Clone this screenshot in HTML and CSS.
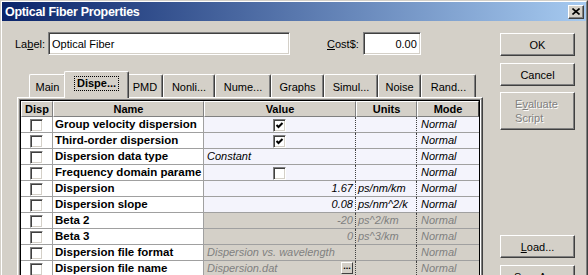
FILE: index.html
```html
<!DOCTYPE html>
<html lang="en">
<head>
  <meta charset="UTF-8">
  <title>Optical Fiber Properties</title>
  <link rel="stylesheet" href="styles.css">
</head>
<body>
  <div class="window">
    <div class="frame">
      <div class="titlebar">
        <span class="title">Optical Fiber Properties</span>
        <span class="close">
          <svg width="8" height="7" viewBox="0 0 8 7"><path d="M0.5 0.5 L7.5 6.5 M7.5 0.5 L0.5 6.5" stroke="#000" stroke-width="1.6"/></svg>
        </span>
      </div>

      <div class="content">
        <div class="main">
          <div class="fields">
            <span class="lbl">La<u>b</u>el:</span>
            <div class="field name-field">Optical Fiber</div>
            <span class="lbl cost-lbl"><u>C</u>ost$:</span>
            <div class="field cost-field">0.00</div>
          </div>

          <div class="tabs">
            <div class="tab">Main</div>
            <div class="tab selected"><span class="focus">Dispe...</span></div>
            <div class="tab">PMD</div>
            <div class="tab">Nonli...</div>
            <div class="tab">Nume...</div>
            <div class="tab">Graphs</div>
            <div class="tab">Simul...</div>
            <div class="tab">Noise</div>
            <div class="tab">Rand...</div>
          </div>

          <div class="panel">
            <div class="gridwrap">
              <div class="gridinner">
                <table class="grid">
                  <colgroup>
                    <col class="c-disp"><col class="c-name"><col class="c-value"><col class="c-units"><col class="c-mode">
                  </colgroup>
                  <tr>
                    <th>Disp</th><th>Name</th><th>Value</th><th>Units</th><th>Mode</th>
                  </tr>
                  <tr>
                    <td class="disp"><span class="cb"></span></td>
                    <td class="name">Group velocity dispersion</td>
                    <td class="value center"><span class="cb"><svg width="9" height="9" viewBox="0 0 9 9"><polyline points="1.5,4 3.5,6 7.5,2" fill="none" stroke="#000" stroke-width="2"/></svg></span></td>
                    <td class="units"></td>
                    <td class="mode">Normal</td>
                  </tr>
                  <tr>
                    <td class="disp"><span class="cb"></span></td>
                    <td class="name">Third-order dispersion</td>
                    <td class="value center"><span class="cb"><svg width="9" height="9" viewBox="0 0 9 9"><polyline points="1.5,4 3.5,6 7.5,2" fill="none" stroke="#000" stroke-width="2"/></svg></span></td>
                    <td class="units"></td>
                    <td class="mode">Normal</td>
                  </tr>
                  <tr>
                    <td class="disp"><span class="cb"></span></td>
                    <td class="name">Dispersion data type</td>
                    <td class="value">Constant</td>
                    <td class="units"></td>
                    <td class="mode">Normal</td>
                  </tr>
                  <tr>
                    <td class="disp"><span class="cb"></span></td>
                    <td class="name">Frequency domain parame</td>
                    <td class="value center"><span class="cb"></span></td>
                    <td class="units"></td>
                    <td class="mode">Normal</td>
                  </tr>
                  <tr>
                    <td class="disp"><span class="cb"></span></td>
                    <td class="name">Dispersion</td>
                    <td class="value num">1.67</td>
                    <td class="units">ps/nm/km</td>
                    <td class="mode">Normal</td>
                  </tr>
                  <tr>
                    <td class="disp"><span class="cb"></span></td>
                    <td class="name">Dispersion slope</td>
                    <td class="value num">0.08</td>
                    <td class="units">ps/nm^2/k</td>
                    <td class="mode">Normal</td>
                  </tr>
                  <tr class="off">
                    <td class="disp"><span class="cb"></span></td>
                    <td class="name">Beta 2</td>
                    <td class="value num">-20</td>
                    <td class="units">ps^2/km</td>
                    <td class="mode">Normal</td>
                  </tr>
                  <tr class="off">
                    <td class="disp"><span class="cb"></span></td>
                    <td class="name">Beta 3</td>
                    <td class="value num">0</td>
                    <td class="units">ps^3/km</td>
                    <td class="mode">Normal</td>
                  </tr>
                  <tr class="off">
                    <td class="disp"><span class="cb"></span></td>
                    <td class="name">Dispersion file format</td>
                    <td class="value">Dispersion vs. wavelength</td>
                    <td class="units"></td>
                    <td class="mode">Normal</td>
                  </tr>
                  <tr class="off">
                    <td class="disp"><span class="cb"></span></td>
                    <td class="name">Dispersion file name</td>
                    <td class="value"><span class="dots">...</span>Dispersion.dat</td>
                    <td class="units"></td>
                    <td class="mode">Normal</td>
                  </tr>
                </table>
              </div>
            </div>
          </div>
        </div>

        <div class="buttons">
          <div class="btn ok">OK</div>
          <div class="btn cancel">Cancel</div>
          <div class="btn evaluate"><span class="twoline">E<u>v</u>aluate<br>Script</span></div>
          <div class="btn load"><u>L</u>oad...</div>
          <div class="btn save">Save <u>A</u>s...</div>
        </div>
      </div>
    </div>
  </div>
</body>
</html>
```

FILE: styles.css
```css
body {
  margin: 0;
  background: #d4d0c8;
  font-family: "Liberation Sans", Arial, sans-serif;
  font-size: 11px;
  color: #000;
  overflow: hidden;
}

.window {
  width: 588px;
  height: 300px;
  box-sizing: border-box;
  border: 1px solid;
  border-color: #d4d0c8 #404040 #404040 #d4d0c8;
}

.frame {
  height: 100%;
  box-sizing: border-box;
  border: 1px solid;
  border-color: #fff #808080 #808080 #fff;
}

.titlebar {
  height: 19px;
  display: flex;
  align-items: center;
  justify-content: space-between;
  padding: 0 2px 0 3px;
  background: linear-gradient(to right, #0a246a, #a6caf0);
  color: #fff;
  font-size: 12.5px;
  font-weight: bold;
  letter-spacing: -0.3px;
}

.close {
  width: 16px;
  height: 14px;
  box-sizing: border-box;
  display: flex;
  align-items: center;
  justify-content: center;
  background: #d4d0c8;
  border: 1px solid;
  border-color: #fff #404040 #404040 #fff;
  box-shadow: inset -1px -1px #808080;
}

.content {
  display: flex;
}

.main {
  width: 483px;
  padding-left: 13px;
}

.fields {
  display: flex;
  align-items: center;
  margin-top: 11px;
  height: 23px;
}

.field {
  height: 23px;
  box-sizing: border-box;
  display: flex;
  align-items: center;
  padding: 0 3px;
  background: #fff;
  border: 1px solid;
  border-color: #808080 #fff #fff #808080;
  box-shadow: inset 1px 1px #404040, inset -1px -1px #d4d0c8;
}

.name-field {
  width: 242px;
  margin-left: 3px;
}

.cost-lbl {
  margin-left: 37px;
}

.cost-field {
  width: 58px;
  margin-left: 4px;
  justify-content: flex-end;
}

.tabs {
  display: flex;
  align-items: flex-end;
  height: 24px;
  margin-top: 18px;
  padding-left: 14px;
}

.tab {
  height: 23px;
  box-sizing: border-box;
  display: flex;
  align-items: center;
  justify-content: center;
  border: 1px solid;
  border-bottom: none;
  border-color: #fff #404040 #fff #fff;
  box-shadow: inset -1px 0 #808080;
  border-radius: 2px 2px 0 0;
  padding-top: 2px;
}

.tab:nth-child(1) { width: 37px; }
.tab:nth-child(3) { width: 36px; }
.tab:nth-child(4) { width: 52px; }
.tab:nth-child(5) { width: 56px; }
.tab:nth-child(6) { width: 53px; }
.tab:nth-child(7) { width: 54px; }
.tab:nth-child(8) { width: 43px; }
.tab:nth-child(9) { width: 55px; }

.tab.selected {
  width: 65px;
  height: 27px;
  margin: 0 -2px -1px;
  padding-top: 0;
  padding-bottom: 4px;
  background: #d4d0c8;
  font-weight: bold;
  position: relative;
  z-index: 1;
}

.focus {
  padding: 0 2px;
  outline: 1px dotted #000;
  line-height: 13px;
}

.panel {
  width: 466px;
  box-sizing: border-box;
  margin-left: 2px;
  padding: 1px;
  border: 1px solid;
  border-color: #fff #404040 #404040 #fff;
  box-shadow: inset -1px -1px #808080;
}

.gridwrap {
  border: 1px solid;
  border-color: #808080 #fff #fff #808080;
}

.gridinner {
  border: 1px solid #000;
  border-bottom: none;
  background: #d4d0c8;
}

.grid {
  width: 458px;
  table-layout: fixed;
  border-collapse: separate;
  border-spacing: 0;
}

.c-disp { width: 32px; }
.c-name { width: 151px; }
.c-value { width: 152px; }
.c-units { width: 61px; }
.c-mode { width: 62px; }

.grid tr {
  height: 16px;
}

.grid th {
  padding: 0;
  font-weight: bold;
  text-align: center;
  background: #d4d0c8;
  border: 1px solid;
  border-color: #fff #808080 #808080 #fff;
  line-height: 13px;
}

.grid th:last-child {
  border-right-color: #404040;
}

.grid td {
  padding: 0 3px;
  line-height: 15px;
  white-space: nowrap;
  overflow: hidden;
  border-bottom: 1px solid #a0a0a0;
  background: #f4f4fc;
  font-style: italic;
}

.grid td.disp {
  text-align: center;
  background: #fff;
  border-right: 1px solid #a0a0a0;
  padding: 0;
}

.grid td.name {
  background: #fff;
  font-weight: bold;
  font-style: normal;
  font-size: 11.5px;
  padding: 0 2px;
  border-right: 1px solid #a0a0a0;
}

.grid td.value,
.grid td.units {
  border-right: 1px dotted #404040;
}

.grid td.units {
  padding: 0 2px;
}

.grid td.mode {
  padding: 0 4px;
}

.grid td.center {
  text-align: center;
}

.grid td.num {
  text-align: right;
  padding-right: 2px;
}

.grid tr.off td.value,
.grid tr.off td.units,
.grid tr.off td.mode {
  background: #d4d0c8;
  color: #808080;
}

.cb {
  display: inline-flex;
  align-items: center;
  justify-content: center;
  width: 13px;
  height: 13px;
  box-sizing: border-box;
  vertical-align: middle;
  background: #fff;
  border: 1px solid;
  border-color: #808080 #fff #fff #808080;
  box-shadow: inset 1px 1px #404040, inset -1px -1px #d4d0c8;
}

.dots {
  float: right;
  width: 12px;
  height: 12px;
  box-sizing: border-box;
  margin: 1px -1px 0 0;
  background: #d4d0c8;
  border: 1px solid;
  border-color: #fff #404040 #404040 #fff;
  color: #000;
  font-style: normal;
  font-weight: bold;
  font-size: 9px;
  line-height: 6px;
  text-align: center;
}

.buttons {
  width: 75px;
  margin-left: 2px;
  padding-top: 12px;
  display: flex;
  flex-direction: column;
}

.btn {
  height: 23px;
  box-sizing: border-box;
  display: flex;
  align-items: center;
  justify-content: center;
  border: 1px solid;
  border-color: #fff #404040 #404040 #fff;
  box-shadow: inset -1px -1px #808080;
}

.cancel {
  margin-top: 7px;
}

.evaluate {
  height: 38px;
  margin-top: 6px;
  color: #808080;
  text-shadow: 1px 1px #fff;
}

.twoline {
  line-height: 14px;
  margin-left: -2px;
}

.load {
  margin-top: 105px;
}

.save {
  margin-top: 7px;
}
```
